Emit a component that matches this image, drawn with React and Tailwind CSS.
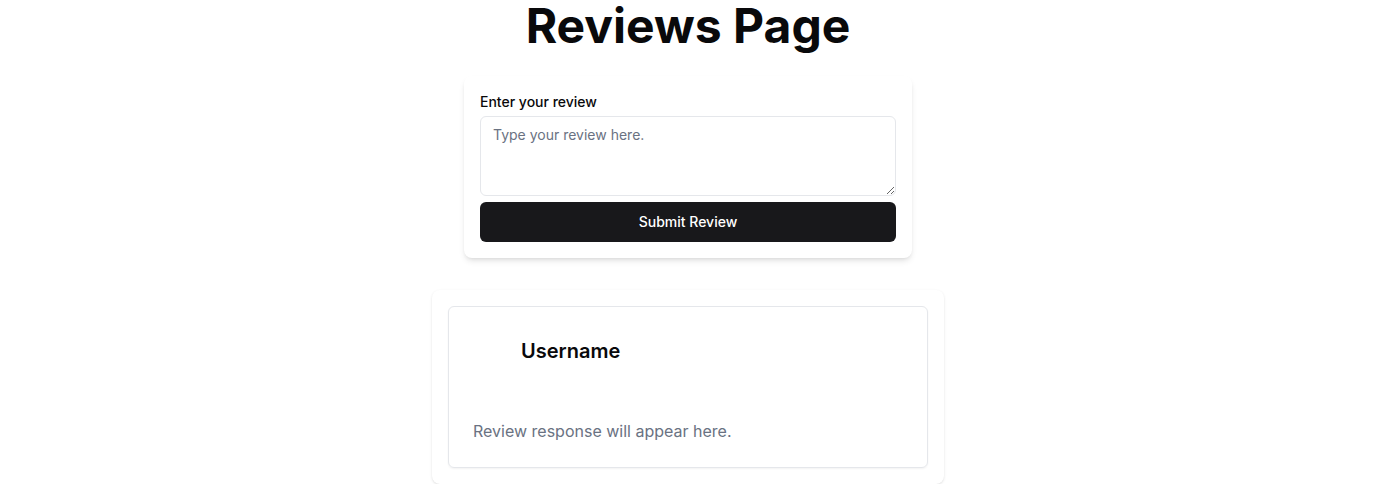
export default function App() {
    return (
        <div className="min-h-screen bg-white flex flex-col items-center font-['Inter',sans-serif] text-[#09090b]">
            <h1 className="text-5xl font-bold leading-[52px] mt-0">Reviews Page</h1>

            {/* Review form */}
            <div className="mt-6 w-[448px] bg-white rounded-lg shadow-md p-4 flex flex-col">
                <label className="text-sm font-medium leading-5 mb-1">Enter your review</label>
                <textarea
                    placeholder="Type your review here."
                    className="h-20 w-full rounded-md border border-gray-200 px-3 py-2 text-sm placeholder:text-gray-500 outline-none"
                />
                <button className="mt-1.5 h-10 w-full rounded-md bg-[#18181b] text-white text-sm font-medium">
                    Submit Review
                </button>
            </div>

            {/* Review list */}
            <div className="mt-8 w-[512px] bg-white rounded-lg shadow-sm p-4">
                <div className="rounded-md border border-gray-200 shadow-xs">
                    <div className="p-6 flex items-center gap-2">
                        <div className="w-10 h-10" />
                        <h2 className="text-xl font-semibold">Username</h2>
                    </div>
                    <div className="px-6 pb-6 pt-6">
                        <p className="text-base text-gray-500">Review response will appear here.</p>
                    </div>
                </div>
            </div>
        </div>
    )
}
